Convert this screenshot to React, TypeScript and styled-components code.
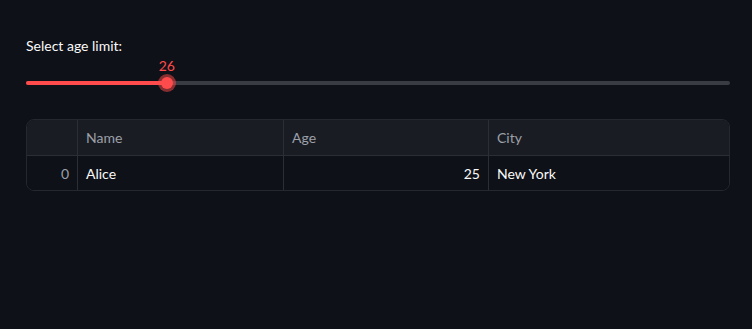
import styled, { createGlobalStyle } from "styled-components";

const GlobalStyle = createGlobalStyle`
    body {
        margin: 0;
        background: #0e1117;
        font-family: "Source Sans Pro", Lato, "Noto Sans", sans-serif;
        color: #fafafa;
    }
`

const rows = [{ index: 0, name: "Alice", age: 25, city: "New York" }];
const min = 18;
const max = 58;
const value = 26;

export default function App() {
    const pct = ((value - min) / (max - min)) * 100;
    return (
        <>
            <GlobalStyle />
            <Page>
                <Label>Select age limit:</Label>
                <SliderBox>
                    <Track>
                        <Fill style={{ width: `${pct}%` }} />
                        <Thumb style={{ left: `${pct}%` }}>
                            <ThumbValue>{value}</ThumbValue>
                        </Thumb>
                    </Track>
                </SliderBox>
                <Table>
                    <HeaderRow>
                        <Cell />
                        <Cell>Name</Cell>
                        <Cell>Age</Cell>
                        <Cell>City</Cell>
                    </HeaderRow>
                    {rows.map((r) => (
                        <BodyRow key={r.index}>
                            <Cell $num $muted>{r.index}</Cell>
                            <Cell>{r.name}</Cell>
                            <Cell $num>{r.age}</Cell>
                            <Cell>{r.city}</Cell>
                        </BodyRow>
                    ))}
                </Table>
            </Page>
        </>
    );
}

const Page = styled.main`
    padding: 38px 22px 0 26px;
    width: 704px;
`
const Label = styled.div`
    font-size: 14px;
    line-height: 16px;
    color: #fafafa;
`
const SliderBox = styled.div`
    height: 65px;
    padding-top: 27px;
    box-sizing: border-box;
`
const Track = styled.div`
    position: relative;
    width: 100%;
    height: 4px;
    border-radius: 2px;
    background: #3a3c44;
`
const Fill = styled.div`
    height: 100%;
    border-radius: 2px;
    background: #ff4b4b;
`
const Thumb = styled.div`
    position: absolute;
    top: 50%;
    width: 12px;
    height: 12px;
    border-radius: 50%;
    background: #ff4b4b;
    box-shadow: 0 0 0 3px rgba(255, 75, 75, 0.5);
    transform: translate(-50%, -50%);
`
const ThumbValue = styled.span`
    position: absolute;
    bottom: 15px;
    left: 50%;
    transform: translateX(-50%);
    font-size: 14px;
    line-height: 16px;
    color: #ff4b4b;
`
const Table = styled.div`
    border: 1px solid #26282f;
    border-radius: 8px;
    overflow: hidden;
    font-size: 14px;
`
const HeaderRow = styled.div`
    display: grid;
    grid-template-columns: 51px 206px 205px 1fr;
    height: 35px;
    background: #1a1c24;
    color: #9ca0a8;
    border-bottom: 1px solid #2c2e35;
`
const BodyRow = styled(HeaderRow)`
    background: #0e1117;
    color: #fafafa;
    height: 34px;
    border-bottom: none;
`
const Cell = styled.div<{ $num?: boolean; $muted?: boolean }>`
    display: flex;
    align-items: center;
    justify-content: ${(p) => (p.$num ? "flex-end" : "flex-start")};
    padding: 0 8px;
    border-right: 1px solid #2c2e35;
    color: ${(p) => (p.$muted ? "#9ca0a8" : "inherit")};
    &:last-child {
        border-right: none;
    }
`
